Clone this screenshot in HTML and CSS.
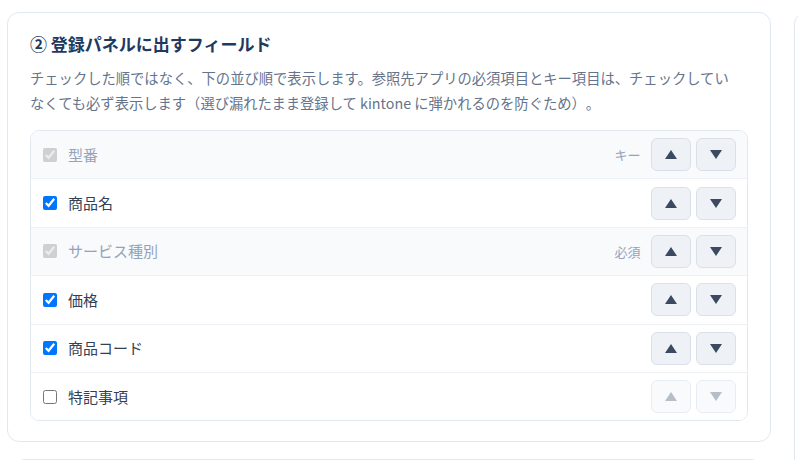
FILE: index.html
```html
<!DOCTYPE html>
<html lang="ja">
<head>
<meta charset="utf-8">
<title>登録パネルに出すフィールド</title>
<link rel="stylesheet" href="styles.css">
</head>
<body>
<div class="page">
  <div class="main-col">
    <section class="card main-card">
      <h2 class="card-title">② 登録パネルに出すフィールド</h2>
      <p class="card-desc">チェックした順ではなく、下の並び順で表示します。参照先アプリの必須項目とキー項目は、チェックしていなくても必ず表示します（選び漏れたまま登録して kintone に弾かれるのを防ぐため）。</p>
      <ul class="field-list">
        <li class="field-row is-locked">
          <input type="checkbox" class="field-check" checked disabled>
          <span class="field-label">型番</span>
          <span class="field-badge">キー</span>
          <div class="move-btns">
            <button class="move-btn" type="button"><svg viewBox="0 0 12 9" class="tri"><polygon points="6,0 12,9 0,9"/></svg></button>
            <button class="move-btn" type="button"><svg viewBox="0 0 12 9" class="tri"><polygon points="0,0 12,0 6,9"/></svg></button>
          </div>
        </li>
        <li class="field-row">
          <input type="checkbox" class="field-check" checked>
          <span class="field-label">商品名</span>
          <div class="move-btns">
            <button class="move-btn" type="button"><svg viewBox="0 0 12 9" class="tri"><polygon points="6,0 12,9 0,9"/></svg></button>
            <button class="move-btn" type="button"><svg viewBox="0 0 12 9" class="tri"><polygon points="0,0 12,0 6,9"/></svg></button>
          </div>
        </li>
        <li class="field-row is-locked">
          <input type="checkbox" class="field-check" checked disabled>
          <span class="field-label">サービス種別</span>
          <span class="field-badge">必須</span>
          <div class="move-btns">
            <button class="move-btn" type="button"><svg viewBox="0 0 12 9" class="tri"><polygon points="6,0 12,9 0,9"/></svg></button>
            <button class="move-btn" type="button"><svg viewBox="0 0 12 9" class="tri"><polygon points="0,0 12,0 6,9"/></svg></button>
          </div>
        </li>
        <li class="field-row">
          <input type="checkbox" class="field-check" checked>
          <span class="field-label">価格</span>
          <div class="move-btns">
            <button class="move-btn" type="button"><svg viewBox="0 0 12 9" class="tri"><polygon points="6,0 12,9 0,9"/></svg></button>
            <button class="move-btn" type="button"><svg viewBox="0 0 12 9" class="tri"><polygon points="0,0 12,0 6,9"/></svg></button>
          </div>
        </li>
        <li class="field-row">
          <input type="checkbox" class="field-check" checked>
          <span class="field-label">商品コード</span>
          <div class="move-btns">
            <button class="move-btn" type="button"><svg viewBox="0 0 12 9" class="tri"><polygon points="6,0 12,9 0,9"/></svg></button>
            <button class="move-btn" type="button"><svg viewBox="0 0 12 9" class="tri"><polygon points="0,0 12,0 6,9"/></svg></button>
          </div>
        </li>
        <li class="field-row">
          <input type="checkbox" class="field-check">
          <span class="field-label">特記事項</span>
          <div class="move-btns">
            <button class="move-btn" type="button" disabled><svg viewBox="0 0 12 9" class="tri"><polygon points="6,0 12,9 0,9"/></svg></button>
            <button class="move-btn" type="button" disabled><svg viewBox="0 0 12 9" class="tri"><polygon points="0,0 12,0 6,9"/></svg></button>
          </div>
        </li>
      </ul>
    </section>
    <section class="card next-card"></section>
  </div>
  <aside class="card side-card"></aside>
</div>
</body>
</html>
```
FILE: styles.css
```css
* { box-sizing: border-box; }

html, body {
  margin: 0;
  padding: 0;
  background: #ffffff;
  overflow: hidden;
  width: 798px;
  height: 460px;
}

body {
  font-family: "Noto Sans CJK JP", "Noto Sans", sans-serif;
  color: #334155;
  text-spacing-trim: space-all;
}

.page {
  display: flex;
  align-items: flex-start;
  gap: 23px;
  padding: 12px 0 0 7px;
  width: 798px;
  height: 460px;
  overflow: hidden;
}

.main-col {
  display: flex;
  flex-direction: column;
  gap: 17px;
  width: 764px;
  flex: none;
}

.card {
  background: #ffffff;
  border: 1px solid #e2e8f0;
  border-radius: 12px;
}

.main-card {
  padding: 19px 22px 20px 22px;
}

.next-card {
  margin-left: 6px;
  width: 750px;
  height: 60px;
}

.side-card {
  width: 300px;
  height: 500px;
  flex: none;
}

.card-title {
  margin: 0;
  font-size: 17px;
  line-height: 24px;
  font-weight: 700;
  color: #1e3a5f;
}

.card-desc {
  margin: 8.5px 0 0 0;
  padding-right: 8px;
  font-size: 14.3px;
  line-height: 25px;
  color: #64748b;
}

.field-list {
  list-style: none;
  margin: 15.5px 0 0 0;
  padding: 0;
  border: 1px solid #e2e8f0;
  border-radius: 9px;
  overflow: hidden;
}

.field-row {
  display: flex;
  align-items: center;
  padding: 7.2px 11px 7.2px 12px;
  border-top: 1px solid #eef2f6;
  background: #ffffff;
}

.field-row:first-child { border-top: none; }

.field-row.is-locked { background: #f8fafc; }

.field-check {
  margin: 0;
  width: 14px;
  height: 14px;
  flex: none;
}

.field-label {
  margin-left: 11px;
  font-size: 15px;
  line-height: 20px;
  color: #334155;
  flex: 1;
}

.is-locked .field-label { color: #94a3b8; }

.field-badge {
  font-size: 13px;
  color: #94a3b8;
  margin-right: 10px;
}

.move-btns {
  display: flex;
  gap: 5.5px;
}

.move-btn {
  width: 40px;
  height: 33px;
  padding: 0;
  margin: 0;
  display: flex;
  align-items: center;
  justify-content: center;
  background: #eef2f7;
  border: 1px solid #d9e0e9;
  border-radius: 6px;
}

.move-btn .tri {
  width: 12px;
  height: 9px;
  fill: #3b4a60;
}

.move-btn:disabled {
  background: #f8fafc;
  border-color: #e8edf3;
}

.move-btn:disabled .tri { fill: #b6bec9; }
```
